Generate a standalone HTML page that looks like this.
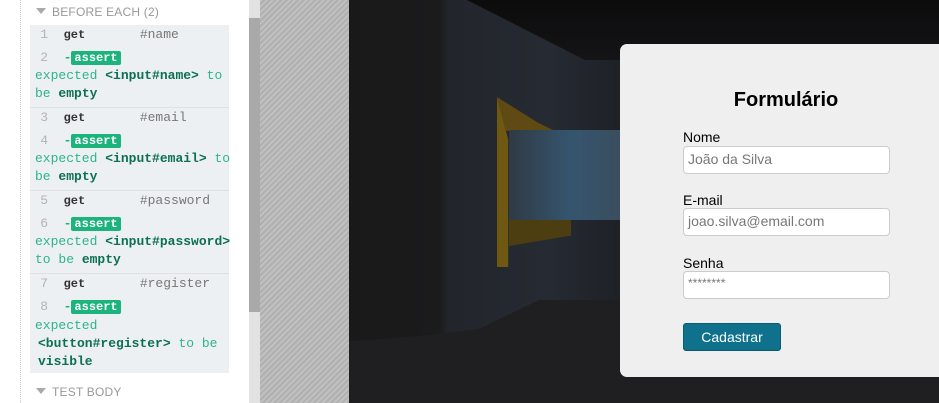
<!DOCTYPE html>
<html><head><meta charset="utf-8"><style>
*{margin:0;padding:0;box-sizing:border-box}
body{width:939px;height:403px;overflow:hidden;position:relative;background:#fff;font-family:"Liberation Sans",sans-serif}
#left{position:absolute;left:0;top:0;width:249px;height:403px;background:#fff}
#dots{position:absolute;left:20px;top:0;height:403px;border-left:1px dotted #ccc}
.hdr{position:absolute;left:36px;font-size:12px;color:#999;letter-spacing:.2px}
.hdr:before{content:"";display:inline-block;border-left:5px solid transparent;border-right:5px solid transparent;border-top:6px solid #aaa;margin-right:6px;vertical-align:2px}
#cmds{position:absolute;left:30px;top:25px;width:199px;height:348px;background:#edf0f2}
.blk{position:absolute;left:0;width:199px;border-bottom:1px solid #dde1e4;font-family:"Liberation Mono",monospace;font-size:13px}
.ln{position:absolute;height:18px;line-height:18px;white-space:nowrap}
.n{color:#b0b4ba;display:inline-block;width:12px;text-align:right}
.g{color:#333;font-weight:bold;font-size:12px}
.sel{color:#777}
.as{background:#1cb37d;color:#fff;font-weight:bold;border-radius:2px;padding:0 3px;font-size:12px}
.dash{color:#1cb37d;font-weight:bold}
.gr{color:#2cb58a}
.b{color:#0d6f55;font-weight:bold}
#track{position:absolute;left:249px;top:0;width:11px;height:403px;background:#e2e2e2}
#thumb{position:absolute;left:249px;top:18px;width:11px;height:294px;background:#a9a9a9}
#stripe{position:absolute;left:260px;top:0;width:89px;height:403px;background:repeating-linear-gradient(135deg,#c0c0c0 0 2px,#b0b0b0 2px 4px)}
#img{position:absolute;left:349px;top:0;width:590px;height:403px;background:#1d1d1f;overflow:hidden}
.r{position:absolute}
#card{position:absolute;left:620px;top:44px;width:330px;height:333px;background:#efefef;border-radius:7px}
#card h1{position:absolute;left:0;width:332px;text-align:center;top:45px;font-size:20px;font-weight:bold;color:#000}
.lab{position:absolute;left:63px;font-size:14px;color:#000}
.inp{position:absolute;left:63px;width:207px;height:28px;background:#fff;border:1px solid #ccc;border-radius:4px;font-size:14px;color:#777;padding:4px 0 0 4px}
#btn{position:absolute;left:63px;top:279px;width:98px;height:28px;background:#0f718c;border:1px solid #0a5a70;border-radius:3px;color:#fff;font-size:14px;text-align:center;line-height:26px}
</style></head><body>
<div id="left">
<div id="dots"></div>
<div class="hdr" style="top:5px">BEFORE EACH (2)</div>
<div id="cmds">
 <div class="blk" style="top:0;height:83px">
  <div class="ln" style="top:1px;left:6px"><span class="n">1</span>&nbsp;&nbsp;<span class="g">get</span>&nbsp;&nbsp;&nbsp;&nbsp;&nbsp;&nbsp;&nbsp;<span class="sel">#name</span></div>
  <div class="ln" style="top:24px;left:6px"><span class="n">2</span>&nbsp;&nbsp;<span class="dash">-</span><span class="as">assert</span></div>
  <div class="ln" style="top:42px;left:5px"><span class="gr">expected</span> <span class="b">&lt;input#name&gt;</span> <span class="gr">to</span></div>
  <div class="ln" style="top:60px;left:5px"><span class="gr">be</span> <span class="b">empty</span></div>
 </div>
 <div class="blk" style="top:83px;height:83px">
  <div class="ln" style="top:1px;left:6px"><span class="n">3</span>&nbsp;&nbsp;<span class="g">get</span>&nbsp;&nbsp;&nbsp;&nbsp;&nbsp;&nbsp;&nbsp;<span class="sel">#email</span></div>
  <div class="ln" style="top:24px;left:6px"><span class="n">4</span>&nbsp;&nbsp;<span class="dash">-</span><span class="as">assert</span></div>
  <div class="ln" style="top:42px;left:5px"><span class="gr">expected</span> <span class="b">&lt;input#email&gt;</span> <span class="gr">to</span></div>
  <div class="ln" style="top:60px;left:5px"><span class="gr">be</span> <span class="b">empty</span></div>
 </div>
 <div class="blk" style="top:166px;height:83px">
  <div class="ln" style="top:1px;left:6px"><span class="n">5</span>&nbsp;&nbsp;<span class="g">get</span>&nbsp;&nbsp;&nbsp;&nbsp;&nbsp;&nbsp;&nbsp;<span class="sel">#password</span></div>
  <div class="ln" style="top:24px;left:6px"><span class="n">6</span>&nbsp;&nbsp;<span class="dash">-</span><span class="as">assert</span></div>
  <div class="ln" style="top:42px;left:5px"><span class="gr">expected</span> <span class="b">&lt;input#password&gt;</span></div>
  <div class="ln" style="top:60px;left:5px"><span class="gr">to be</span> <span class="b">empty</span></div>
 </div>
 <div class="blk" style="top:249px;height:99px;border:none">
  <div class="ln" style="top:1px;left:6px"><span class="n">7</span>&nbsp;&nbsp;<span class="g">get</span>&nbsp;&nbsp;&nbsp;&nbsp;&nbsp;&nbsp;&nbsp;<span class="sel">#register</span></div>
  <div class="ln" style="top:24px;left:6px"><span class="n">8</span>&nbsp;&nbsp;<span class="dash">-</span><span class="as">assert</span></div>
  <div class="ln" style="top:43px;left:5px"><span class="gr">expected</span></div>
  <div class="ln" style="top:61px;left:8px"><span class="b">&lt;button#register&gt;</span> <span class="gr">to be</span></div>
  <div class="ln" style="top:79px;left:8px"><span class="b">visible</span></div>
 </div>
</div>
<div class="hdr" style="top:385px">TEST BODY</div>
</div>
<div id="track"></div><div id="thumb"></div>
<div id="stripe"></div>
<div id="img">
 <div class="r" style="left:0;top:0;width:590px;height:403px;background:linear-gradient(90deg,#19191a 0,#1b1b1c 90px,#22252b 100px,#262a32 200px,#1e2126 271px)"></div>
 <div class="r" style="left:0;top:0;width:590px;height:60px;background:linear-gradient(180deg,#0c0c0d,#141416);clip-path:polygon(0 0,100% 0,100% 100%,40% 100%,20% 0)"></div>
 <div class="r" style="left:0;top:300px;width:590px;height:103px;background:#1f1f21;clip-path:polygon(0 40%,70px 35%,130px 28%,190px 0,100% 0,100% 100%,0 100%)"></div>
 <div class="r" style="left:148px;top:97px;width:56px;height:170px;background:#6e5812;clip-path:polygon(0 0,20% 25%,20% 100%,0 100%)"></div>
 <div class="r" style="left:148px;top:97px;width:58px;height:34px;background:#5e4a12;clip-path:polygon(0 0,70% 75%,100% 100%,15% 100%)"></div>
 <div class="r" style="left:160px;top:130px;width:111px;height:90px;background:linear-gradient(90deg,#2f3a44,#35556e 55%,#3a4e5e)"></div>
 <div class="r" style="left:160px;top:220px;width:62px;height:26px;background:#4d3e12;clip-path:polygon(0 0,100% 0,100% 60%,0 100%)"></div>
</div>
<div id="card">
 <h1>Formulário</h1>
 <div class="lab" style="top:85px">Nome</div>
 <div class="inp" style="top:102px">João da Silva</div>
 <div class="lab" style="top:148px">E-mail</div>
 <div class="inp" style="top:164px">joao.silva@email.com</div>
 <div class="lab" style="top:211px">Senha</div>
 <div class="inp" style="top:227px;font-size:12px">********</div>
 <div id="btn">Cadastrar</div>
</div>
</body></html>
